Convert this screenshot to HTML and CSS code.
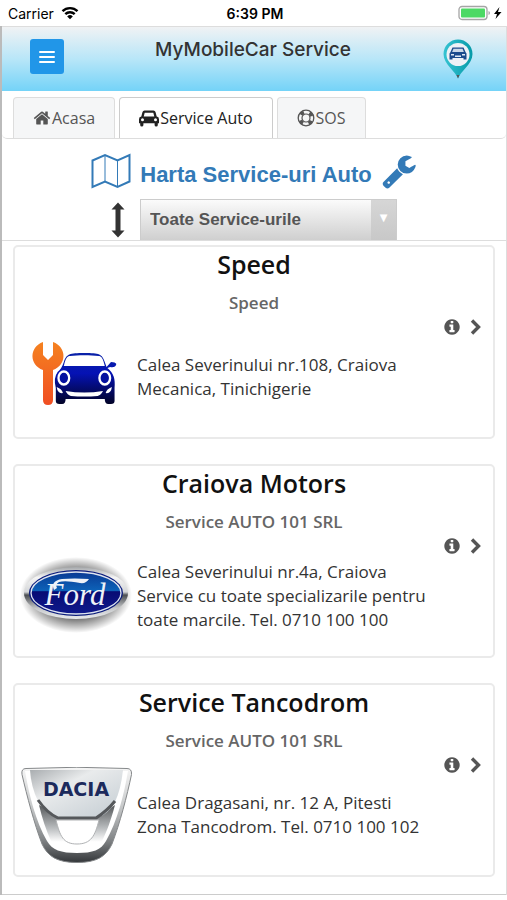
FILE: index.html
```html
<!DOCTYPE html>
<html lang="ro">
<head>
    <meta charset="UTF-8">
    <meta name="viewport" content="width=device-width, initial-scale=1.0">
    <title>MyMobileCar Service</title>
    <link rel="stylesheet" href="styles.css">
</head>
<body>
    <svg class="sprite" width="0" height="0" aria-hidden="true">
        <symbol id="info" viewBox="0 0 1792 1792">
            <path fill="currentColor" d="M1152 1376v-160q0-14-9-23t-23-9h-96v-512q0-14-9-23t-23-9h-320q-14 0-23 9t-9 23v160q0 14 9 23t23 9h96v320h-96q-14 0-23 9t-9 23v160q0 14 9 23t23 9h448q14 0 23-9t9-23zm-128-896v-160q0-14-9-23t-23-9h-192q-14 0-23 9t-9 23v160q0 14 9 23t23 9h192q14 0 23-9t9-23zm640 416q0 209-103 385.5t-279.5 279.5-385.5 103-385.5-103-279.5-279.5-103-385.5 103-385.5 279.5-279.5 385.5-103 385.5 103 279.5 279.5 103 385.5z"/>
        </symbol>
        <symbol id="chevron" viewBox="0 0 12 18">
            <path fill="none" stroke="currentColor" stroke-width="3.400" d="M2 2.500 8.500 9 2 15.500"/>
        </symbol>
    </svg>

    <div class="status-bar">
        <div class="carrier">
            <span>Carrier</span>
            <svg width="18" height="14" viewBox="0 0 18 14" fill="none" stroke="#000" stroke-width="2.400">
                <path d="M1.500 5.200a10.600 10.600 0 0 1 15 0M4.300 8.200a6.600 6.600 0 0 1 9.400 0"/>
                <path fill="#000" stroke="none" d="M9 13.300 6.200 10.400a4 4 0 0 1 5.600 0z"/>
            </svg>
        </div>
        <strong class="clock">6:39 PM</strong>
        <div class="battery">
            <svg width="44" height="16" viewBox="0 0 44 16">
                <rect x="1" y="1.500" width="28" height="13" rx="3" fill="#fff" stroke="#a5a5a5" stroke-width="1.300"/>
                <rect x="3" y="3.500" width="24" height="9" rx="1" fill="#4cd964"/>
                <path d="M30.500 6v4q1.500-.5 1.500-2t-1.500-2z" fill="#a5a5a5"/>
                <path d="M41.500 2 36 9h3l-1.500 5L43.500 7h-3.500z" fill="#000"/>
            </svg>
        </div>
    </div>

    <div class="app">
        <header class="header">
            <button class="menu-button" aria-label="Meniu">
                <svg width="16" height="14" viewBox="0 0 16 14" stroke="#fff" stroke-width="2" stroke-linecap="round">
                    <path d="M1 2h14M1 7h14M1 12h14"/>
                </svg>
            </button>
            <h1>MyMobileCar Service</h1>
            <svg class="pin" width="32" height="40" viewBox="0 0 32 40">
                <defs>
                    <linearGradient id="pinFill" x1="0" x2="1">
                        <stop offset="0" stop-color="#35c3d2"/>
                        <stop offset="1" stop-color="#079aa8"/>
                    </linearGradient>
                </defs>
                <path d="M16 39.500C14 33 1.500 25 1.500 15a14.500 14.500 0 0 1 29 0C30.500 25 18 33 16 39.500z" fill="url(#pinFill)"/>
                <path d="m14.500 36 1.500 3.500 1.500-3.500z" fill="#555"/>
                <circle cx="16" cy="15.500" r="11.500" fill="#eef1f6"/>
                <path d="M10.500 8.500h11l2 4.500 1 1.500v6h-3v-1.500h-11v1.500h-3v-6l1-1.500z" fill="#1b4a8c"/>
                <path d="M11.500 9.800h9l1.400 3.200H10.100z" fill="#cbd8e8"/>
                <path d="M9 15h3v1.500H9zM20 15h3v1.500h-3zM13 16.500h6V18h-6z" fill="#dfe8f3"/>
            </svg>
        </header>

        <nav class="tabs">
            <a href="#acasa">
                <svg width="18" height="18" viewBox="0 0 1792 1792" fill="currentColor">
                    <path d="M1472 992v480q0 26-19 45t-45 19h-384v-384h-256v384h-384q-26 0-45-19t-19-45v-480q0-1 .5-3t.5-3l575-474 575 474q1 2 1 6zm223-69l-62 74q-8 9-21 11h-3q-13 0-21-7l-692-577-692 577q-12 8-24 7-13-2-21-11l-62-74q-8-10-7-23.500t11-21.500l719-599q32-26 76-26t76 26l244 204v-195q0-14 9-23t23-9h192q14 0 23 9t9 23v408l219 182q10 8 11 21.500t-7 23.500z"/>
                </svg>Acasa</a>
            <a href="#service" class="active">
                <svg width="20" height="18" viewBox="0 0 20 18" fill="currentColor">
                    <path fill-rule="evenodd" d="M5.500 1.500h9q1.500 0 2 1.500l1.200 4.500q2.300.4 2.300 2.700v4h-1.200V16q0 1.500-1.600 1.500T15.600 16v-1.800H4.400V16q0 1.500-1.600 1.500T1.200 16v-1.800H0v-4q0-2.300 2.300-2.700L3.500 3q.5-1.500 2-1.500zM5.700 3.700l-1 3.800h10.600l-1-3.800zM3.500 9.200a1.500 1.500 0 1 0 0 3 1.500 1.500 0 0 0 0-3zM16.500 9.200a1.500 1.500 0 1 0 0 3 1.500 1.500 0 0 0 0-3z"/>
                </svg>Service Auto</a>
            <a href="#sos">
                <svg width="18" height="18" viewBox="0 0 18 18" fill="none" stroke="currentColor">
                    <circle cx="9" cy="9" r="7.800" stroke-width="1.300"/>
                    <circle cx="9" cy="9" r="4" stroke-width="1.200"/>
                    <circle cx="9" cy="9" r="6" stroke-width="3.600" stroke-dasharray="3.600 5.825" stroke-dashoffset="-2.900"/>
                </svg>SOS</a>
        </nav>

        <div class="map-row">
            <a href="#harta" class="map-link">
                <svg width="40" height="36" viewBox="0 0 40 36" fill="none" stroke="currentColor" stroke-width="2">
                    <path d="M1.500 7.500 14 2l12.500 5.500L38.500 2v26.500L26.500 34 14 28.500 1.500 34z"/>
                    <path stroke-width="1" d="M14 2v26.500M26.500 7.500V34"/>
                </svg>
                <span>Harta Service-uri Auto</span>
                <svg width="36" height="36" viewBox="0 0 1792 1792" fill="currentColor">
                    <path d="M448 1472q0-26-19-45t-45-19-45 19-19 45 19 45 45 19 45-19 19-45zm644-420l-682 682q-37 37-90 37-52 0-91-37l-106-108q-38-36-38-90 0-53 38-91l681-681q39 98 114.500 173.500t173.500 114.500zm634-435q0 39-23 106-47 134-164.500 217.500t-258.500 83.500q-185 0-316.500-131.500t-131.500-316.500 131.500-316.500 316.500-131.500q58 0 121.500 16.500t107.500 46.500q16 11 16 28t-16 28l-293 169v224l193 107q5-3 79-48.500t135.500-81 70.500-35.500q15 0 23.500 10t8.500 25z"/>
                </svg>
            </a>
        </div>

        <div class="filter-row">
            <svg width="14" height="36" viewBox="0 0 14 36" fill="#333">
                <path d="M7 .5 13.500 7.500H9.500v21h4L7 35.500.5 28.500h4v-21h-4z"/>
            </svg>
            <div class="select-box">
                <select aria-label="Tip service">
                    <option>Toate Service-urile</option>
                    <option>Mecanica</option>
                    <option>Tinichigerie</option>
                </select>
            </div>
        </div>

        <main class="list">
            <article class="card">
                <h2>Speed</h2>
                <p class="company">Speed</p>
                <a href="#speed" class="actions" aria-label="Detalii Speed">
                    <svg width="18" height="18"><use href="#info"/></svg>
                    <svg width="12" height="18"><use href="#chevron"/></svg>
                </a>
                <div class="details">
                    <svg class="logo" width="112" height="96" viewBox="0 0 112 96">
                        <defs>
                            <linearGradient id="orange" x1="0" y1="0" x2="0" y2="1">
                                <stop offset="0" stop-color="#f58220"/>
                                <stop offset="1" stop-color="#f04e23"/>
                            </linearGradient>
                            <linearGradient id="blue" x1="0" y1="0" x2="0" y2="1">
                                <stop offset="0" stop-color="#0a22a8"/>
                                <stop offset=".4" stop-color="#0512b4"/>
                                <stop offset="1" stop-color="#020327"/>
                            </linearGradient>
                        </defs>
                        <path fill="url(#orange)" d="M22 13C8 18 8 36 22 41v30q0 5 5 5t5-5V41C46 36 46 18 32 13v13l-5 5-5-5z"/>
                        <g transform="matrix(.89 0 0 1 1 0)">
                            <path fill="url(#blue)" fill-rule="evenodd" d="M40 43c3-2 5-5 7-10 3-8 6-9 23-9s20 1 23 9l2 5 5-5q5 0 6 2-1 4-7 3l-3 1c7 5 9 11 8 20v13q0 3-4 3h-3q-4 0-4-5H49q0 5-4 5h-3q-4 0-4-3V59q-3-10 2-16zM47 37h46c-2-8-4-10-7-10-9-1-23-1-32 0-3 0-5 2-7 10z"/>
                            <ellipse cx="47" cy="49" rx="6" ry="6.500" fill="#0511a0" stroke="#fff" stroke-width="2.600"/>
                            <ellipse cx="93" cy="49" rx="6" ry="6.500" fill="#0511a0" stroke="#fff" stroke-width="2.600"/>
                            <path fill="#fff" d="M49 62q21 3 42 0-2 4-6 5-15 1-30 0-4-1-6-5zM39 58q6 2 7 6-6 1-7-6zM101 58q-6 2-7 6 6 1 7-6z"/>
                        </g>
                    </svg>
                    <p>Calea Severinului nr.108, Craiova<br>Mecanica, Tinichigerie</p>
                </div>
            </article>

            <article class="card">
                <h2>Craiova Motors</h2>
                <p class="company">Service AUTO 101 SRL</p>
                <a href="#craiova-motors" class="actions" aria-label="Detalii Craiova Motors">
                    <svg width="18" height="18"><use href="#info"/></svg>
                    <svg width="12" height="18"><use href="#chevron"/></svg>
                </a>
                <div class="details">
                    <svg class="logo" width="112" height="96" viewBox="0 0 112 96">
                        <defs>
                            <linearGradient id="fordBlue" x1="0" y1="0" x2="0" y2="1">
                                <stop offset="0" stop-color="#0a3a94"/>
                                <stop offset=".44" stop-color="#0d62b8"/>
                                <stop offset=".47" stop-color="#070c74"/>
                                <stop offset="1" stop-color="#101a8c"/>
                            </linearGradient>
                            <linearGradient id="chrome" x1="0" y1="0" x2="0" y2="1">
                                <stop offset="0" stop-color="#a5a8ab"/>
                                <stop offset=".2" stop-color="#f4f4f4"/>
                                <stop offset=".48" stop-color="#d4d6d8"/>
                                <stop offset=".54" stop-color="#4b4e52"/>
                                <stop offset=".8" stop-color="#c8cacc"/>
                                <stop offset="1" stop-color="#e8eaec"/>
                            </linearGradient>
                            <radialGradient id="fordShadow">
                                <stop offset=".65" stop-color="#000" stop-opacity=".5"/>
                                <stop offset="1" stop-color="#000" stop-opacity="0"/>
                            </radialGradient>
                        </defs>
                        <ellipse cx="55" cy="47" rx="56" ry="38" fill="url(#fordShadow)"/>
                        <ellipse cx="55" cy="45" rx="52" ry="26" fill="url(#chrome)"/>
                        <ellipse cx="55" cy="45" rx="47" ry="23" fill="#0b1c7c"/>
                        <ellipse cx="55" cy="45" rx="45" ry="21" fill="url(#fordBlue)" stroke="#dfe5f0" stroke-width="1.300"/>
                        <text class="ford-name" x="54" y="57" text-anchor="middle">Ford</text>
                        <path d="M33 42q-4-9 8-11 12-1 27 0-3 5-9 4-15-3-21-1-4 2-2 6z" fill="#eef2f8"/>
                    </svg>
                    <p>Calea Severinului nr.4a, Craiova<br>Service cu toate specializarile pentru<br>toate marcile. Tel. 0710 100 100</p>
                </div>
            </article>

            <article class="card">
                <h2>Service Tancodrom</h2>
                <p class="company">Service AUTO 101 SRL</p>
                <a href="#tancodrom" class="actions" aria-label="Detalii Service Tancodrom">
                    <svg width="18" height="18"><use href="#info"/></svg>
                    <svg width="12" height="18"><use href="#chevron"/></svg>
                </a>
                <div class="details">
                    <svg class="logo" width="112" height="96" viewBox="0 0 112 96">
                        <defs>
                            <linearGradient id="rim" x1="0" y1="0" x2="0" y2="1">
                                <stop offset="0" stop-color="#f6f6f6"/>
                                <stop offset=".4" stop-color="#c9cbcc"/>
                                <stop offset=".75" stop-color="#85888a"/>
                                <stop offset="1" stop-color="#34373a"/>
                            </linearGradient>
                            <linearGradient id="band" x1="0" y1="0" x2="0" y2="1">
                                <stop offset="0" stop-color="#55585a"/>
                                <stop offset=".5" stop-color="#b9bcbe"/>
                                <stop offset=".8" stop-color="#ffffff"/>
                            </linearGradient>
                            <linearGradient id="plate" x1="0" y1="0" x2="1" y2="1">
                                <stop offset="0" stop-color="#a9adb0"/>
                                <stop offset=".35" stop-color="#e9ebec"/>
                                <stop offset="1" stop-color="#c3ccd2"/>
                            </linearGradient>
                        </defs>
                        <path d="M5 1.500Q56-1 106 1.500q5 0 4.500 6C106 29 99 56 91 77 85 90 75 95.500 56 95.500S27 90 21 77C13 56 6 29 1 7.500q-1-6 4-6z" fill="url(#rim)" stroke="#85888a" stroke-width="1"/>
                        <path d="M4 4h103C103 28 96 55 85 74c-5 9-13 12-29 12s-25-3-30-12C15 55 8 28 4 4z" fill="#fff"/>
                        <path d="M18 38 40 51h34l20-13C90 53 86 64 81 74c-5 8-11 10-25 10s-21-2-26-10C25 63 21 51 18 38z" fill="url(#band)"/>
                        <path d="M9 3h93q-2 19-8 32-7 12-16 15H36q-11-6-19-16Q10 20 9 3z" fill="url(#plate)"/>
                        <path d="M17 33q9 13 20 18h38q11-7 19-17" fill="none" stroke="#55585b" stroke-width="3"/>
                        <path d="M35 53h43c-4 16-8 24-22 24S39 69 35 53z" fill="#fff" stroke="#b0b2b4" stroke-width="1"/>
                        <text class="dacia-name" x="55" y="29" text-anchor="middle">DACIA</text>
                    </svg>
                    <p>Calea Dragasani, nr. 12 A, Pitesti<br>Zona Tancodrom. Tel. 0710 100 102</p>
                </div>
            </article>
        </main>
    </div>
</body>
</html>
```
FILE: styles.css
```css
* {
    box-sizing: border-box;
}
body {
    margin: 0;
    background-color: #fff;
    color: #333;
    font-family: "Trebuchet MS", "Open Sans", sans-serif;
    font-size: 17px;
}
svg {
    display: block;
    flex-shrink: 0;
}
.sprite {
    position: absolute;
}
.status-bar {
    display: grid;
    grid-template-columns: 1fr auto 1fr;
    align-items: center;
    height: 26px;
    padding: 0 5px 0 8px;
    color: #000;
    font-family: Inter, sans-serif;
    font-size: 14px;
}
.carrier {
    display: flex;
    align-items: center;
    gap: 7px;
}
.clock {
    font-weight: 600;
}
.battery {
    justify-self: end;
}
.app {
    border-left: 2px solid #bbb;
    border-right: 1px solid #ddd;
    margin-bottom: 5px;
}
.header {
    display: flex;
    justify-content: space-between;
    align-items: flex-start;
    height: 65px;
    padding: 12px 32px 0 28px;
    border-top: 1px solid #ddd;
    background: linear-gradient(#f0f2f4, #b8e6f8 50%, #74d3f8);
}
.header h1 {
    margin: 0;
    color: #333;
    font-family: Inter, sans-serif;
    font-size: 19px;
    font-weight: 500;
    line-height: 22px;
}
.menu-button {
    display: flex;
    justify-content: center;
    align-items: center;
    width: 34px;
    height: 35px;
    padding: 0;
    border: 0;
    border-radius: 3px;
    background-color: #2196e8;
    cursor: pointer;
}
.tabs {
    display: flex;
    gap: 4px;
    height: 48px;
    padding: 6px 11px 0;
    border-bottom: 1px solid #ddd;
    border-radius: 0 0 5px 5px;
}
.tabs a {
    display: flex;
    align-items: center;
    gap: 1px;
    padding: 0 19px;
    border: 1px solid #ddd;
    border-bottom: 0;
    border-radius: 4px 4px 0 0;
    background-color: #f5f6f7;
    color: #555;
    font-size: 16px;
    text-decoration: none;
}
.tabs a.active {
    border-color: #ccc;
    background-color: #fff;
    color: #222;
}
.map-row {
    display: flex;
    justify-content: center;
    padding-top: 12px;
}
.map-link {
    display: flex;
    align-items: center;
    gap: 9px;
    height: 40px;
    color: #337ab7;
    font-family: "Liberation Sans", Arial, sans-serif;
    font-size: 22px;
    font-weight: bold;
    text-decoration: none;
}
.map-link span {
    padding-top: 8px;
}
.filter-row {
    display: flex;
    justify-content: center;
    align-items: center;
    gap: 15px;
    margin-top: 8px;
}
.select-box {
    position: relative;
    width: 257px;
}
.select-box select {
    appearance: none;
    display: block;
    width: 100%;
    height: 41px;
    padding: 0 34px 2px 9px;
    border: 1px solid #ccc;
    border-bottom: 0;
    border-radius: 0;
    background: linear-gradient(#fbfbfb, #cfcfcf);
    color: #555;
    font-family: "Liberation Sans", Arial, sans-serif;
    font-size: 17px;
    font-weight: bold;
}
.select-box::after {
    content: "▼";
    position: absolute;
    top: 1px;
    right: 1px;
    bottom: 0;
    width: 25px;
    background: linear-gradient(#d6d6d6, #c8c8c8);
    color: #fff;
    font-family: "DejaVu Sans", sans-serif;
    font-size: 10px;
    line-height: 36px;
    text-align: center;
    pointer-events: none;
}
.list {
    display: grid;
    gap: 25px;
    padding: 4px 11px 17px;
    border-top: 1px solid #ddd;
    border-bottom: 1px solid #ccc;
}
.card {
    height: 194px;
    padding: 0 6px;
    border: 2px solid #eaeaea;
    border-radius: 5px;
}
.card h2 {
    margin: 0;
    color: #111;
    font-size: 25px;
    font-weight: 600;
    line-height: 34px;
    text-align: center;
}
.company {
    margin: 10px 0 0;
    color: #666;
    font-weight: 600;
    line-height: 24px;
    text-align: center;
}
.actions {
    display: flex;
    justify-content: flex-end;
    align-items: center;
    gap: 9px;
    height: 24px;
    padding-right: 5px;
    color: #555;
}
.details {
    display: flex;
    align-items: center;
    gap: 4px;
    margin-top: -10px;
}
.details p {
    margin: 0;
    line-height: 24px;
}
.ford-name {
    fill: #eef2f8;
    font-family: "Liberation Serif", serif;
    font-size: 31px;
    font-style: italic;
}
.dacia-name {
    fill: #1c2a5c;
    font-family: "DejaVu Sans", sans-serif;
    font-size: 19px;
    font-weight: bold;
}
```
